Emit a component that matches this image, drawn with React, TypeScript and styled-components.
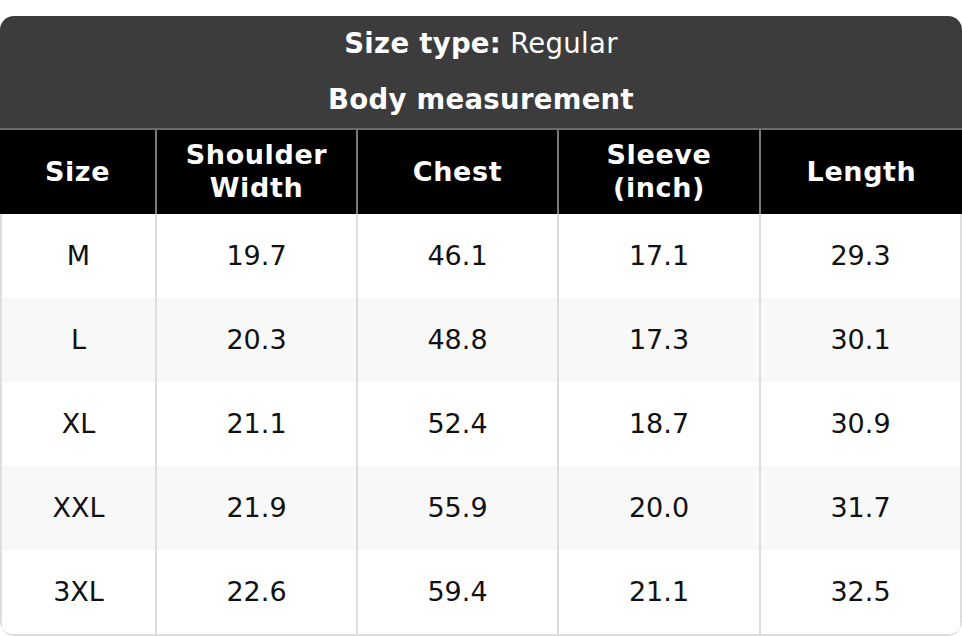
import React from "react";
import styled, { createGlobalStyle } from "styled-components";

const Global = createGlobalStyle`
  html, body { margin: 0; padding: 0; background: #ffffff; }
  body { font-family: "DejaVu Sans", "Liberation Sans", sans-serif; }
  * { box-sizing: border-box; }
`;

const Card = styled.div`
  margin-top: 16px;
  width: 962px;
  border-radius: 14px;
  overflow: hidden;
  background: #ffffff;
`;

const Title = styled.div`
  background: #3c3c3c;
  color: #ffffff;
  border-bottom: 2px solid #6b6b6b;
`;

const TitleLine = styled.div`
  height: 56px;
  padding-bottom: 3px;
  display: flex;
  align-items: center;
  justify-content: center;
  font-size: 27.5px;
  letter-spacing: 0.3px;
`;

const Strong = styled.span`
  font-weight: 700;
`;

const Row = styled.div<{ $head?: boolean; $alt?: boolean }>`
  display: grid;
  grid-template-columns: 155px 201px 201px 202px 1fr;
  height: 84px;
  background: ${(p) => (p.$head ? "#000000" : p.$alt ? "#f8f8f8" : "#ffffff")};
  color: ${(p) => (p.$head ? "#ffffff" : "#111111")};
  font-weight: ${(p) => (p.$head ? 700 : 400)};
`;

const Cell = styled.div<{ $head?: boolean; $last?: boolean }>`
  display: flex;
  align-items: center;
  justify-content: center;
  text-align: center;
  font-size: 27px;
  line-height: 33px;
  letter-spacing: ${(p) => (p.$head ? "0.6px" : "0")};
  padding-bottom: 2px;
  border-left: 2px solid ${(p) => (p.$head ? "#7a7a7a" : "#dddddd")};
  border-right: ${(p) => (p.$last && !p.$head ? "2px solid #dddddd" : "none")};
  &:first-child {
    border-left: ${(p) => (p.$head ? "none" : "2px solid #dddddd")};
  }
`;

const Body = styled.div`
  border-bottom: 2px solid #dddddd;
  border-bottom-left-radius: 14px;
  border-bottom-right-radius: 14px;
  overflow: hidden;
`;

const headers: React.ReactNode[] = [
  "Size",
  <>Shoulder<br />Width</>,
  "Chest",
  <>Sleeve<br />(inch)</>,
  "Length",
];

const data: string[][] = [
  ["M", "19.7", "46.1", "17.1", "29.3"],
  ["L", "20.3", "48.8", "17.3", "30.1"],
  ["XL", "21.1", "52.4", "18.7", "30.9"],
  ["XXL", "21.9", "55.9", "20.0", "31.7"],
  ["3XL", "22.6", "59.4", "21.1", "32.5"],
];

export default function App() {
  return (
    <>
      <Global />
      <Card>
        <Title>
          <TitleLine>
            <Strong>Size type:</Strong>&nbsp;Regular
          </TitleLine>
          <TitleLine>
            <Strong>Body measurement</Strong>
          </TitleLine>
        </Title>
        <Row $head>
          {headers.map((h, i) => (
            <Cell key={i} $head $last={i === headers.length - 1}>
              <span>{h}</span>
            </Cell>
          ))}
        </Row>
        <Body>
          {data.map((r, ri) => (
            <Row key={ri} $alt={ri % 2 === 1}>
              {r.map((v, ci) => (
                <Cell key={ci} $last={ci === r.length - 1}>
                  {v}
                </Cell>
              ))}
            </Row>
          ))}
        </Body>
      </Card>
    </>
  );
}
